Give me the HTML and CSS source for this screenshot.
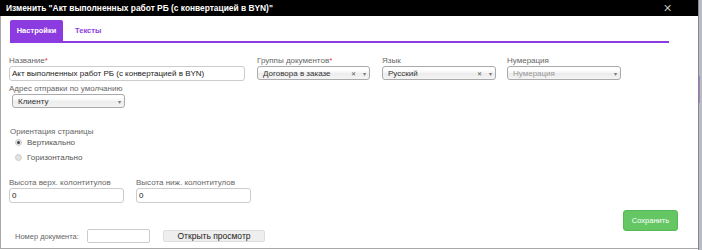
FILE: index.html
```html
<!DOCTYPE html>
<html>
<head>
    <meta charset="utf-8" />
    <link rel="stylesheet" href="styles.css">
</head>
<body>
    <div class="page">
        <div class="modal">
            <div class="modal-header">
                <span class="modal-title">Изменить "Акт выполненных работ РБ (с конвертацией в BYN)"</span>
                <span class="close">&#x2715;</span>
            </div>
            <div class="modal-body">
                <div class="tabs">
                    <div class="tab active">Настройки</div>
                    <div class="tab">Тексты</div>
                </div>

                <div class="row top-row">
                    <div class="col col-name">
                        <div class="field">
                            <label>Название<span class="req">*</span></label>
                            <div class="input">Акт выполненных работ РБ (с конвертацией в BYN)</div>
                        </div>
                        <div class="field">
                            <label>Адрес отправки по умолчанию</label>
                            <div class="select sel-address"><span>Клиенту</span><span class="arrow">&#9662;</span></div>
                        </div>
                    </div>
                    <div class="col col-group">
                        <label>Группы документов<span class="req">*</span></label>
                        <div class="select"><span>Договора в заказе</span><span class="ctl"><span class="clear">&#x2715;</span><span class="arrow">&#9662;</span></span></div>
                    </div>
                    <div class="col col-lang">
                        <label>Язык</label>
                        <div class="select"><span>Русский</span><span class="ctl"><span class="clear">&#x2715;</span><span class="arrow">&#9662;</span></span></div>
                    </div>
                    <div class="col col-num">
                        <label>Нумерация</label>
                        <div class="select placeholder"><span>Нумерация</span><span class="arrow">&#9662;</span></div>
                    </div>
                </div>

                <div class="orient">
                    <label>Ориентация страницы</label>
                    <div class="radio"><span class="dot checked"></span>Вертикально</div>
                    <div class="radio"><span class="dot"></span>Горизонтально</div>
                </div>

                <div class="row heights">
                    <div class="col col-h">
                        <label>Высота верх. колонтитулов</label>
                        <div class="input">0</div>
                    </div>
                    <div class="col col-h">
                        <label>Высота ниж. колонтитулов</label>
                        <div class="input">0</div>
                    </div>
                </div>

                <div class="save-row">
                    <button class="btn-save">Сохранить</button>
                </div>

                <div class="preview-row">
                    <span class="doc-label">Номер документа:</span>
                    <span class="doc-input"></span>
                    <button class="btn-preview">Открыть просмотр</button>
                </div>
            </div>
        </div>
        <div class="scroll">
            <div class="scroll-mark"></div>
        </div>
    </div>
</body>
</html>
```
FILE: styles.css
```css
body {
    margin: 0;
    font-family: "Liberation Sans", Arial, sans-serif;
    background-color: #fff;
    color: #333;
}

.page {
    display: flex;
    width: 702px;
    height: 250px;
    overflow: hidden;
}

.modal {
    width: 698px;
    height: 248px;
    border-left: 1px solid #a8a8a8;
    border-bottom: 1px solid #a8a8a8;
    background-color: #fff;
    display: flex;
    flex-direction: column;
}

.scroll {
    width: 3px;
    background-color: #b8bcc4;
    border-left: 1px solid #888;
    padding-top: 76px;
}

.scroll-mark {
    height: 27px;
    width: 1px;
    background-color: #a27ed6;
}

.modal-header {
    height: 16px;
    background-color: #000;
    color: #fff;
    display: flex;
    align-items: center;
    justify-content: space-between;
    padding: 0 26px 0 6px;
    margin-left: -1px;
}

.modal-title {
    font-size: 8.4px;
    font-weight: bold;
}

.close {
    color: #bbb;
    font-size: 11px;
}

.modal-body {
    padding: 4px 9px 0 9px;
    display: flex;
    flex-direction: column;
}

.tabs {
    display: flex;
    border-bottom: 2px solid #8c3be0;
    width: 659px;
    height: 21px;
}

.tab {
    font-size: 7.5px;
    font-weight: bold;
    color: #8c3be0;
    padding: 0 12px;
    display: flex;
    align-items: center;
}

.tab.active {
    background-color: #8c3be0;
    color: #fff;
    border-radius: 2px 2px 0 0;
    width: 53px;
    padding: 0;
    justify-content: center;
}

label {
    display: block;
    font-size: 8px;
    color: #666;
    margin-bottom: 1px;
}

.req {
    color: #e33;
}

.row {
    display: flex;
}

.top-row {
    margin-top: 13px;
}

.col-name {
    width: 236px;
    margin-left: -1px;
    margin-right: 12px;
}

.col-group {
    width: 113px;
    margin-right: 12px;
}

.col-lang {
    width: 114px;
    margin-right: 11px;
}

.col-num {
    width: 114px;
}

.field + .field {
    margin-top: 3px;
}

.input {
    height: 13px;
    border: 1px solid #ccc;
    border-radius: 3px;
    font-size: 8px;
    color: #222;
    padding: 0 2px;
    display: flex;
    align-items: center;
}

.select {
    height: 12px;
    border: 1px solid #aaa;
    border-radius: 3px;
    background: linear-gradient(#fff 20%, #f4f4f4 50%, #ececec 52%, #f4f4f4 100%);
    font-size: 8px;
    color: #333;
    padding: 0 3px 0 5px;
    display: flex;
    align-items: center;
    justify-content: space-between;
}

.sel-address {
    width: 103px;
    margin-left: 3px;
}

.select.placeholder {
    color: #999;
}

.ctl {
    display: flex;
    align-items: center;
    gap: 7px;
}

.clear {
    font-size: 6px;
    color: #555;
}

.arrow {
    font-size: 6px;
    color: #777;
}

.orient {
    margin-top: 19px;
}

.radio {
    display: flex;
    align-items: center;
    font-size: 8px;
    color: #555;
    height: 11px;
    margin: 1px 0 4px 5px;
}

.dot {
    width: 7px;
    height: 7px;
    border-radius: 50%;
    background-color: #e2e2e2;
    border: 1px solid #ccc;
    margin-right: 5px;
    box-sizing: border-box;
    display: flex;
    align-items: center;
    justify-content: center;
}

.dot.checked::after {
    content: "";
    width: 3px;
    height: 3px;
    border-radius: 50%;
    background-color: #444;
}

.heights {
    margin-top: 11px;
}

.col-h {
    width: 115px;
    margin-right: 12px;
}

.col-h:first-child {
    margin-left: -1px;
}

.save-row {
    display: flex;
    justify-content: flex-end;
    padding-right: 11px;
    margin-top: 7px;
}

.btn-save {
    width: 55px;
    height: 21px;
    border: 1px solid #57b857;
    border-radius: 3px;
    background-color: #64c764;
    color: #fff;
    font-family: "Liberation Sans", Arial, sans-serif;
    font-size: 7.5px;
    padding: 0;
}

.preview-row {
    display: flex;
    align-items: center;
    margin-top: -2px;
    padding-left: 5px;
}

.doc-label {
    font-size: 7.5px;
    color: #666;
    width: 72px;
}

.doc-input {
    width: 61px;
    height: 12px;
    border: 1px solid #ccc;
    border-radius: 2px;
    margin-right: 13px;
}

.btn-preview {
    width: 102px;
    height: 12px;
    border: 1px solid #ddd;
    border-radius: 2px;
    background-color: #eee;
    color: #222;
    font-family: "Liberation Sans", Arial, sans-serif;
    font-size: 8.5px;
    padding: 0;
    line-height: 10px;
}
```
